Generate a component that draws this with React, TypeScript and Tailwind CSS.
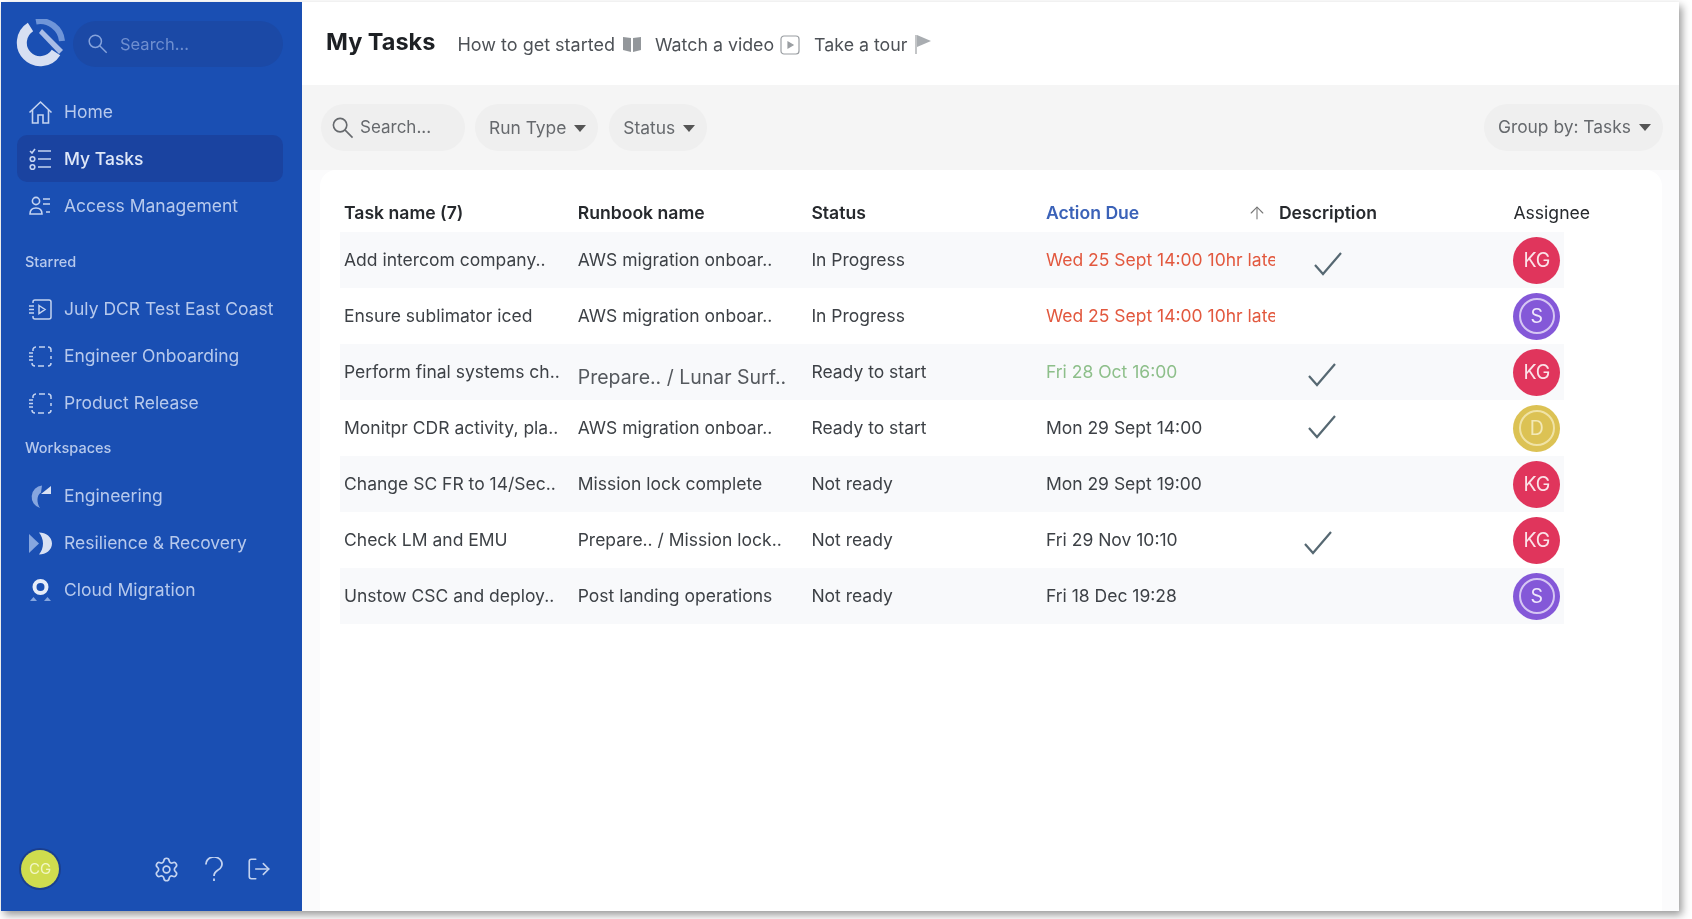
import { ArrowUp, LogOut, Settings } from "lucide-react";
import type { ReactNode } from "react";

const Logo = () => (
  <svg className="-ml-[1px]" width="50" height="50" viewBox="0 0 50 50" fill="none">
    <path d="M14.500 8A18.500 18.500 0 1 0 40 33.500" stroke="#d7dff2" strokeWidth="10" />
    <path d="M20 2.500A22 22 0 0 1 46 22" stroke="#6f95d8" strokeWidth="6" />
    <path d="M26 10L47 31L43 35L23 14Z" fill="#a9bde6" />
  </svg>
);

const SearchGlyph = ({ color, size }: { color: string; size: number }) => (
  <svg width={size} height={size} viewBox="0 0 24 24" fill="none" stroke={color} strokeWidth="1.700">
    <circle cx="9.500" cy="9.500" r="7" />
    <path d="M14.500 14.500L22.500 22.500" />
  </svg>
);

const HomeIcon = () => (
  <svg width="25" height="25" viewBox="0 0 25 25" fill="none" stroke="#c4d3f0" strokeWidth="1.600">
    <path d="M1.500 12.500L12.500 2l11 10.500" />
    <path d="M4.500 10v13h5.500v-8h5v8h5.500V10" />
  </svg>
);

const TasksIcon = () => (
  <svg width="24" height="24" viewBox="0 0 24 24" fill="none" stroke="#c4d3f0" strokeWidth="1.600">
    <path d="M2 4l2 2 3-4M10 4h13M10 12h13M10 20h13" />
    <circle cx="4.500" cy="12" r="2.300" />
    <circle cx="4.500" cy="20" r="2.300" />
  </svg>
);

const AccessIcon = () => (
  <svg width="24" height="24" viewBox="0 0 24 24" fill="none" stroke="#c4d3f0" strokeWidth="1.600">
    <circle cx="8" cy="7" r="3.600" />
    <path d="M2 20c0-4 2.500-6 6-6s6 2 6 6zM15 5h7M15 10h7M18 18h4" />
  </svg>
);

const RunIcon = () => (
  <svg width="25" height="25" viewBox="0 0 25 25" fill="none" stroke="#c4d3f0" strokeWidth="1.500">
    <path d="M5 6V5a2 2 0 0 1 2-2h14a2 2 0 0 1 2 2v15a2 2 0 0 1-2 2H7a2 2 0 0 1-2-2v-1" />
    <path d="M1 9h5M1 12.500h5M1 16h5M11 8.500l6 4-6 4z" />
  </svg>
);

const DashIcon = () => (
  <svg width="25" height="25" viewBox="0 0 25 25" fill="none" stroke="#c4d3f0" strokeWidth="1.500">
    <path d="M5 7V5a3 3 0 0 1 3-2M11 3h6M20 3a3 3 0 0 1 3 3v2M23 12v3M23 19a3 3 0 0 1-3 3M16 22h-6M7 22a3 3 0 0 1-3-3" />
    <path d="M1 9h4M1 12.500h4M1 16h4" />
  </svg>
);

const EngineeringIcon = () => (
  <svg width="25" height="25" viewBox="0 0 25 25">
    <path d="M14 1.500A11.500 11.500 0 0 0 12 24C8.500 19 8.500 11 13 8.500z" fill="#86a6df" />
    <path d="M13 10L23 2v8z" fill="#d9e1f3" />
  </svg>
);

const ResilienceIcon = () => (
  <svg width="25" height="25" viewBox="0 0 25 25">
    <path d="M1 3l10 9.500L1 22z" fill="#86a6df" />
    <path d="M11 1.500c7 0 13 4.500 13 11s-6 11-13 11c2.500-3 4-7 4-11s-1.500-8-4-11z" fill="#d9e1f3" />
  </svg>
);

const CloudIcon = () => (
  <svg width="25" height="25" viewBox="0 0 25 25">
    <circle cx="12.500" cy="9" r="6" fill="none" stroke="#e6ecf8" strokeWidth="4" />
    <path d="M2 23l3.500-4 3.500 4zM16 23l3.500-4 3.500 4z" fill="#86a6df" />
  </svg>
);

const navTop: [ReactNode, string, boolean][] = [
  [<HomeIcon />, "Home", false],
  [<TasksIcon />, "My Tasks", true],
  [<AccessIcon />, "Access Management", false],
];

const starred: [ReactNode, string][] = [
  [<RunIcon />, "July DCR Test East Coast"],
  [<DashIcon />, "Engineer Onboarding"],
  [<DashIcon />, "Product Release"],
];

const workspaces: [ReactNode, string][] = [
  [<EngineeringIcon />, "Engineering"],
  [<ResilienceIcon />, "Resilience & Recovery"],
  [<CloudIcon />, "Cloud Migration"],
];

function NavItem({ icon, label, active }: { icon: ReactNode; label: string; active?: boolean }) {
  return (
    <div
      className={`flex h-[47px] w-[266px] items-center rounded-[10px] pl-[11px] pt-[1px] text-[17.500px] ${
        active ? "bg-[#1a43a0] font-medium text-[#e0e8f8]" : "text-[#b7c9ec]"
      }`}
    >
      <span className="flex w-[36px] shrink-0 items-center">{icon}</span>
      {label}
    </div>
  );
}

function Avatar({ kind }: { kind: "KG" | "S" | "D" }) {
  if (kind === "KG") {
    return (
      <div className="flex h-[47px] w-[47px] items-center justify-center rounded-full bg-[#e0355c] pt-[1px] text-[19.500px] text-[#fbe3e8]">
        KG
      </div>
    );
  }
  return (
    <div
      className={`flex h-[47px] w-[47px] items-center justify-center rounded-full ${
        kind === "S" ? "bg-[#8458d8]" : "bg-[#dcc254]"
      }`}
    >
      <div
        className={`flex h-[36px] w-[36px] items-center justify-center rounded-full border-2 pt-[1px] text-[19.500px] ${
          kind === "S" ? "border-[#d6c6f3] text-[#efe8fb]" : "border-[#f0e3a6] text-[#f3e9b8]"
        }`}
      >
        {kind}
      </div>
    </div>
  );
}

const Check = ({ className }: { className: string }) => (
  <svg className={className} width="30" height="26" viewBox="0 0 30 26" fill="none" stroke="#566872" strokeWidth="2.200">
    <path d="M2 14l8 9L28 2" />
  </svg>
);

type Row = {
  task: string;
  book: string;
  bookBig?: boolean;
  status: string;
  due: string;
  dueColor: string;
  check?: string;
  who: "KG" | "S" | "D";
};

const rows: Row[] = [
  { task: "Add intercom company..", book: "AWS migration onboar..", status: "In Progress", due: "Wed 25 Sept 14:00 10hr late", dueColor: "text-[#e2583e]", check: "ml-[34px] mt-[8px]", who: "KG" },
  { task: "Ensure sublimator iced", book: "AWS migration onboar..", status: "In Progress", due: "Wed 25 Sept 14:00 10hr late", dueColor: "text-[#e2583e]", who: "S" },
  { task: "Perform final systems ch..", book: "Prepare.. / Lunar Surf..", bookBig: true, status: "Ready to start", due: "Fri 28 Oct 16:00", dueColor: "text-[#8dbf8a]", check: "ml-[28px] mt-[6px]", who: "KG" },
  { task: "Monitpr CDR activity, pla..", book: "AWS migration onboar..", status: "Ready to start", due: "Mon 29 Sept 14:00", dueColor: "text-[#3d4146]", check: "ml-[28px] mb-[2px]", who: "D" },
  { task: "Change SC FR to 14/Sec..", book: "Mission lock complete", status: "Not ready", due: "Mon 29 Sept 19:00", dueColor: "text-[#3d4146]", who: "KG" },
  { task: "Check LM and EMU", book: "Prepare.. / Mission lock..", status: "Not ready", due: "Fri 29 Nov 10:10", dueColor: "text-[#3d4146]", check: "ml-[24px] mt-[6px]", who: "KG" },
  { task: "Unstow CSC and deploy..", book: "Post landing operations", status: "Not ready", due: "Fri 18 Dec 19:28", dueColor: "text-[#3d4146]", who: "S" },
];

const Caret = () => <span className="ml-[8px] inline-block h-0 w-0 border-x-[6px] border-t-[7px] border-x-transparent border-t-[#555]" />;

export default function App() {
  return (
    <div className="h-[919px] w-[1692px] overflow-hidden bg-white pl-[1px] pt-[2px] font-['Inter',sans-serif]">
      <div className="flex h-[909px] w-[1678px] shadow-[3px_4px_8px_rgba(0,0,0,0.4)] blur-[0.6px]">
        <aside className="flex w-[301px] shrink-0 flex-col bg-[#1a4fb3] pl-[16px]">
          <div className="mt-[18px] flex h-[47px] items-center">
            <Logo />
            <div className="ml-[7px] flex h-[46px] w-[210px] items-center rounded-full bg-[#1b49a6] pl-[14px] text-[16.500px] text-[#6f8fd0]">
              <SearchGlyph size={21} color="#86a3dc" />
              <span className="ml-[12px] mt-[1px]">Search...</span>
            </div>
          </div>
          <nav className="mt-[21px] flex flex-col">
            {navTop.map(([icon, label, active]) => (
              <NavItem key={label} icon={icon} label={label} active={active} />
            ))}
          </nav>
          <div className="mt-[14px] flex h-[37px] items-center pl-[8px] text-[14.500px] font-medium text-[#b7c9ec]">Starred</div>
          <div className="mt-[5px] flex flex-col">
            {starred.map(([icon, label]) => (
              <NavItem key={label} icon={icon} label={label} />
            ))}
          </div>
          <div className="flex h-[46px] items-center pb-[2px] pl-[8px] text-[14.500px] font-medium text-[#b7c9ec]">Workspaces</div>
          <div className="flex flex-col">
            {workspaces.map(([icon, label]) => (
              <NavItem key={label} icon={icon} label={label} />
            ))}
          </div>
          <div className="mb-[23px] mt-auto flex h-[38px] items-center">
            <div className="ml-[4px] flex h-[38px] w-[38px] items-center justify-center rounded-full bg-[#cfdc4e] text-[15px] text-[#f2f6c4] shadow-[0_0_0_2px_#1a3f8f]">
              CG
            </div>
            <Settings className="ml-[94px]" size={27} strokeWidth={1.500} color="#c4d3f0" />
            <svg className="ml-[24px]" width="20" height="25" viewBox="0 0 20 25" fill="none" stroke="#c4d3f0" strokeWidth="1.800">
              <path d="M2 7.500a8 7 0 1 1 12 5.500C11.500 14.500 10 16 10 19M10 21.500v2.500" />
            </svg>
            <LogOut className="ml-[22px]" size={26} strokeWidth={1.500} color="#c4d3f0" />
          </div>
        </aside>

        <main className="flex min-w-0 flex-1 flex-col bg-[#fbfbfc]">
          <header className="flex h-[83px] shrink-0 items-center bg-white pl-[24px] pt-[2px] text-[#4d5156]">
            <h1 className="mb-[6px] text-[23.500px] font-bold text-[#1d2024]">My Tasks</h1>
            <span className="ml-[22px] text-[18px]">How to get started</span>
            <svg className="ml-[8px] mb-[2px]" width="18" height="16" viewBox="0 0 18 16" fill="#93979b">
              <path d="M0 1l8 1v14l-8-2zM10 2l8-1v13l-8 2z" />
            </svg>
            <span className="ml-[14px] mt-[1px] text-[17.800px]">Watch a video</span>
            <svg className="ml-[6px]" width="20" height="20" viewBox="0 0 20 20" fill="none" stroke="#9a9ea2" strokeWidth="1.200">
              <rect x="1" y="1" width="18" height="18" rx="3" />
              <path d="M8 7l5 3-5 3z" fill="#9a9ea2" />
            </svg>
            <span className="ml-[14px] mt-[1px] text-[17.800px]">Take a tour</span>
            <svg className="ml-[6px] mb-[2px]" width="18" height="20" viewBox="0 0 18 20">
              <path d="M1 1h2v19H1z" fill="#c3c5c7" />
              <path d="M3 1l14 6-14 6z" fill="#a9adb1" />
            </svg>
          </header>

          <div className="flex h-[85px] shrink-0 items-center bg-[#f5f5f5] pl-[19px] pr-[16px] text-[17.400px] text-[#66696d]">
            <div className="flex h-[47px] w-[144px] items-center rounded-[24px] bg-[#efefef] pl-[10px]">
              <SearchGlyph size={23} color="#66696d" />
              <span className="ml-[6px] text-[17px]">Search...</span>
            </div>
            <div className="ml-[10px] flex h-[47px] items-center rounded-[24px] bg-[#efefef] pl-[14px] pr-[12px] pt-[2px]">
              Run Type
              <Caret />
            </div>
            <div className="ml-[11px] flex h-[47px] items-center rounded-[24px] bg-[#efefef] pl-[14px] pr-[12px] pt-[2px]">
              Status
              <Caret />
            </div>
            <div className="ml-auto flex h-[47px] items-center rounded-[24px] bg-[#efefef] pl-[14px] pr-[12px]">
              Group by: Tasks
              <Caret />
            </div>
          </div>

          <div className="flex min-h-0 flex-1 pl-[18px] pr-[17px]">
            <section className="flex-1 rounded-t-[16px] bg-white pl-[20px]">
              <div className="grid h-[62px] grid-cols-[233.700px_233.700px_234.500px_233px_234.500px_auto] items-center pl-[4px] pt-[24px] text-[17.600px] font-semibold text-[#26292d]">
                <div>Task name (7)</div>
                <div>Runbook name</div>
                <div>Status</div>
                <div className="flex items-center text-[#3b62b8]">
                  Action Due
                  <ArrowUp className="ml-auto mr-[12px]" size={20} strokeWidth={1.300} color="#777" />
                </div>
                <div>Description</div>
                <div className="font-normal">Assignee</div>
              </div>
              {rows.map((r, i) => (
                <div
                  key={r.task}
                  className={`grid h-[56px] w-[1224px] grid-cols-[233.700px_233.700px_234.500px_233px_234.500px_auto] items-center pl-[4px] text-[17.500px] text-[#3d4146] ${
                    i % 2 === 0 ? "bg-[#f8f9fb]" : "bg-white"
                  }`}
                >
                  <div className="whitespace-nowrap">{r.task}</div>
                  <div className={`whitespace-nowrap ${r.bookBig ? "mt-[11px] text-[19.500px] text-[#55595e]" : ""}`}>{r.book}</div>
                  <div>{r.status}</div>
                  <div className={`w-[229px] overflow-hidden whitespace-nowrap ${r.dueColor}`}>{r.due}</div>
                  <div className="flex items-center">{r.check && <Check className={r.check} />}</div>
                  <Avatar kind={r.who} />
                </div>
              ))}
            </section>
          </div>
        </main>
      </div>
    </div>
  );
}
